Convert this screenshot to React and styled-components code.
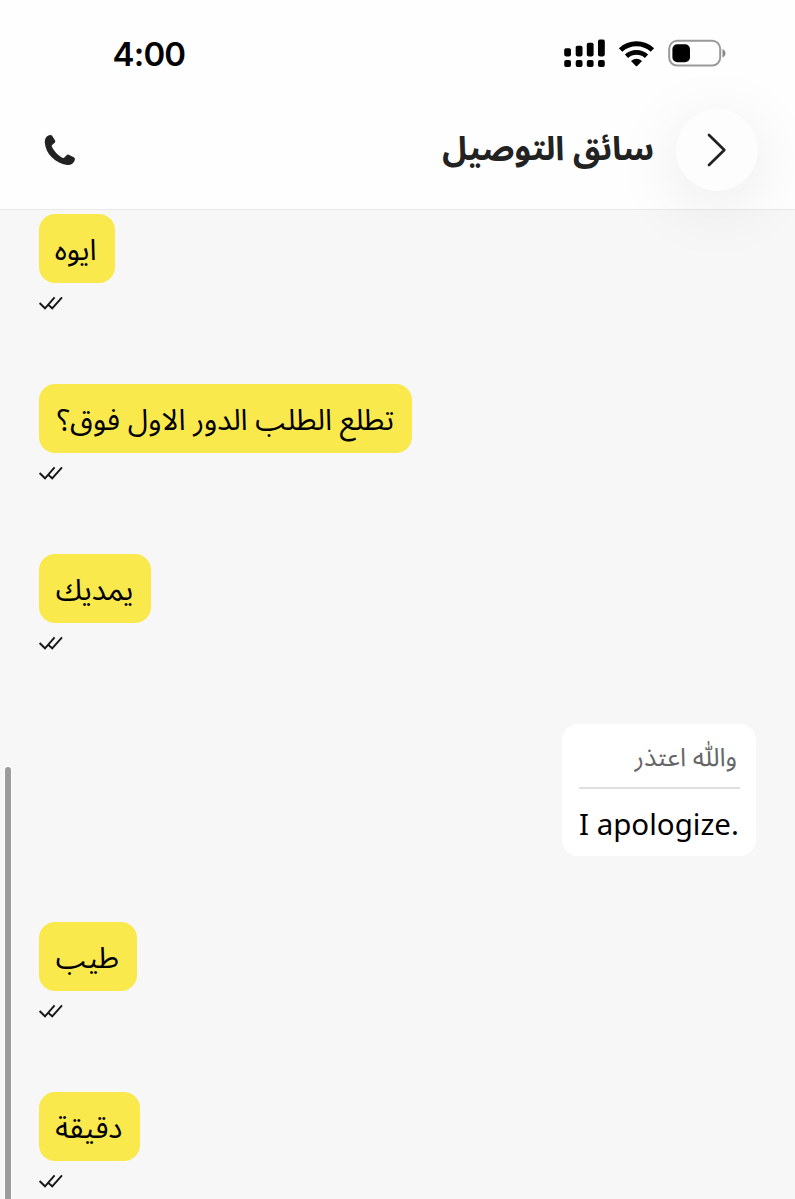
import React from 'react'
import styled, { createGlobalStyle } from 'styled-components'

const messages = [
    { text: 'ايوه', width: 75.5 },
    { text: 'تطلع الطلب الدور الاول فوق؟', width: 373 },
    { text: 'يمديك', width: 112.4 },
    { text: 'I apologize.', original: 'واللّٰه اعتذر', incoming: true },
    { text: 'طيب', width: 98 },
    { text: 'دقيقة', width: 101.4 },
]

const SignalIcon = () => (
    <svg width="42" height="28" viewBox="0 0 42 28">
        <rect x="0.2" y="8.2" width="6.8" height="8.2" rx="1.8" />
        <rect x="11.7" y="5.7" width="6.8" height="10.7" rx="1.8" />
        <rect x="22.8" y="2.7" width="6.8" height="13.7" rx="1.8" />
        <rect x="34" y="-0.4" width="6.8" height="16.8" rx="1.8" />
        <rect x="0.2" y="20" width="6.8" height="7" rx="2" />
        <rect x="11.7" y="20" width="6.8" height="7" rx="2" />
        <rect x="22.8" y="20" width="6.8" height="7" rx="2" />
        <rect x="34" y="20" width="6.8" height="7" rx="2" />
    </svg>
)

const WifiIcon = () => (
    <svg width="36" height="27" viewBox="0 0 36 27">
        <path d="M1.6 9 A23.5 23.5 0 0 1 33.4 9" fill="none" stroke="#000" strokeWidth="5" />
        <path d="M7.5 15.2 A14.8 14.8 0 0 1 27.5 15.2" fill="none" stroke="#000" strokeWidth="4.8" />
        <path d="M12 20 Q17.5 15.6 23 20 L18.2 25 Q17.5 25.7 16.8 25 Z" />
    </svg>
)

const BatteryIcon = () => (
    <svg width="59" height="28" viewBox="0 0 59 28">
        <rect x="1.2" y="0.8" width="51" height="24.8" rx="8" fill="none" stroke="#999" strokeWidth="2" />
        <rect x="4.4" y="4.2" width="17.6" height="18" rx="5" />
        <path d="M54.5 9 Q57.4 10.2 57.4 13.2 Q57.4 16.2 54.5 17.4 Z" fill="#888" />
    </svg>
)

const PhoneIcon = () => (
    <svg width="32" height="32" viewBox="0 0 32 32">
        <path
            d="M4.2 1.6 Q6.7 0.2 8 1.6 L11.2 6.8 Q11.7 8.2 10.4 9.1 L8.1 10.9 Q7.5 11.5 7.8 12.4 C9.5 16.5 14.8 22.2 19 24 Q19.8 24.3 20.4 23.6 L22.6 21.2 Q23.5 20.2 24.8 20.8 L30.2 23.6 Q31.5 24.5 30.6 26.8 Q28.6 31.4 23 31 C11 29 1.8 20 0.8 8.8 Q0.4 3.9 4.2 1.6 Z"
            fill="#222"
        />
    </svg>
)

const ReadIcon = () => (
    <svg width="25" height="15" viewBox="0 0 25 15">
        <path
            d="M0.6 7 L6 12.3 L15.6 1.4 M8.8 8.4 L13.2 12.3 L23 1.4"
            fill="none"
            stroke="#161616"
            strokeWidth="1.9"
        />
    </svg>
)

const App = () => {
    return (
        <Screen>
            <GlobalStyle />
            <Header>
                <StatusBar>
                    <Time>4:00</Time>
                    <StatusIcons>
                        <SignalIcon />
                        <WifiIcon />
                        <BatteryIcon />
                    </StatusIcons>
                </StatusBar>
                <TitleBar>
                    <CallButton aria-label="Call">
                        <PhoneIcon />
                    </CallButton>
                    <TitleGroup>
                        <Title>سائق التوصيل</Title>
                        <BackButton aria-label="Back">
                            <svg width="20" height="34" viewBox="0 0 20 34">
                                <path d="M2 2 L17.3 17 L2 32" fill="none" stroke="#222" strokeWidth="2.7" strokeLinecap="round" strokeLinejoin="round" />
                            </svg>
                        </BackButton>
                    </TitleGroup>
                </TitleBar>
            </Header>
            <Chat>
                {messages.map((message) =>
                    message.incoming ? (
                        <Incoming key={message.text}>
                            <Original>{message.original}</Original>
                            <Translation>{message.text}</Translation>
                        </Incoming>
                    ) : (
                        <Outgoing key={message.text}>
                            <Bubble $width={message.width}>{message.text}</Bubble>
                            <ReadIcon />
                        </Outgoing>
                    )
                )}
            </Chat>
            <ScrollThumb />
        </Screen>
    )
}

const GlobalStyle = createGlobalStyle`
    * {
        box-sizing: border-box;
    }
    body {
        margin: 0;
        overflow: hidden;
    }
    svg {
        display: block;
        flex-shrink: 0;
        overflow: visible;
    }
`

const Screen = styled.div`
    position: relative;
    display: flex;
    flex-direction: column;
    height: 1199px;
    overflow: hidden;
    background-color: #f7f7f7;
    font-family: "Noto Sans Arabic", "Noto Sans", "DejaVu Sans", sans-serif;
`

const Header = styled.header`
    flex: none;
    height: 210px;
    background-color: #fefefe;
    border-bottom: 1px solid #e9e9e9;
`

const StatusBar = styled.div`
    display: flex;
    justify-content: space-between;
    align-items: center;
    height: 108px;
    padding: 0 68px 0 112.5px;
`

const Time = styled.span`
    font-family: Inter, sans-serif;
    font-size: 33px;
    font-weight: 600;
    letter-spacing: -0.8px;
    color: #000;
`

const StatusIcons = styled.div`
    display: flex;
    align-items: center;
    gap: 13px;
`

const TitleBar = styled.div`
    display: flex;
    justify-content: space-between;
    align-items: center;
    height: 83px;
    padding: 0 37px 0 44px;
`

const CallButton = styled.button`
    padding: 0;
    border: none;
    background: none;
`

const TitleGroup = styled.div`
    display: flex;
    align-items: center;
    gap: 22px;
`

const Title = styled.h1`
    margin: 0;
    padding-top: 1px;
    direction: rtl;
    font-size: 33.2px;
    font-weight: 700;
    line-height: 60px;
    color: #222;
    white-space: nowrap;
`

const BackButton = styled.button`
    display: flex;
    justify-content: center;
    align-items: center;
    width: 82px;
    height: 82px;
    padding: 0;
    border: none;
    border-radius: 50%;
    background-color: #fdfdfd;
    box-shadow: 0 14px 70px rgba(0, 0, 0, 0.09);
`

const Chat = styled.main`
    display: flex;
    flex-direction: column;
    padding: 4.4px 39px 0;
`

const Outgoing = styled.div`
    display: flex;
    flex-direction: column;
    align-items: flex-start;
    gap: 13px;
    height: 170px;
    flex: none;
`

const Bubble = styled.div`
    display: flex;
    align-items: center;
    direction: rtl;
    width: ${(props) => props.$width}px;
    height: 68.4px;
    padding: 3px 18px 0 0;
    border-radius: 16px;
    background-color: #fae94c;
    font-size: 29.5px;
    color: #000;
    white-space: nowrap;
`

const Incoming = styled.div`
    align-self: flex-end;
    flex: none;
    width: 194px;
    height: 131.6px;
    margin-bottom: 66.4px;
    padding: 0 16px 0 17px;
    border-radius: 16px;
    background-color: #fff;
`

const Original = styled.div`
    direction: rtl;
    height: 64.6px;
    padding-right: 3px;
    border-bottom: 2px solid #e0e0e0;
    font-size: 25.6px;
    line-height: 68px;
    color: #666;
    white-space: nowrap;
`

const Translation = styled.div`
    font-family: "Noto Sans", sans-serif;
    font-size: 29.5px;
    line-height: 69px;
    color: #000;
    white-space: nowrap;
`

const ScrollThumb = styled.div`
    position: absolute;
    left: 5px;
    top: 767px;
    width: 6px;
    height: 440px;
    border-radius: 3px;
    background-color: #9c9c9c;
    box-shadow: 0 0 0 1px #fcfcfc;
`

export default App
